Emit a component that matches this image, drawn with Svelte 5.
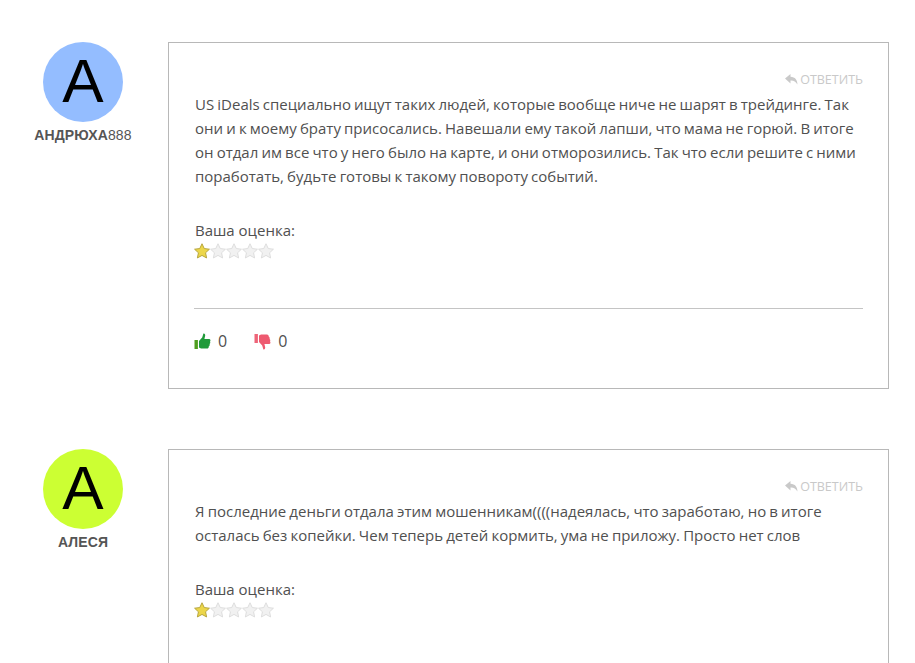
<script>
    const comments = [
        {
            name: 'Андрюха',
            suffix: '888',
            color: '#94bdff',
            lines: [
                'US iDeals специально ищут таких людей, которые вообще ниче не шарят в трейдинге. Так',
                'они и к моему брату присосались. Навешали ему такой лапши, что мама не горюй. В итоге',
                'он отдал им все что у него было на карте, и они отморозились. Так что если решите с ними',
                'поработать, будьте готовы к такому повороту событий.'
            ],
            votes: { up: 0, down: 0 }
        },
        {
            // the rest of this card is below the fold
            name: 'Алеся',
            suffix: '',
            color: '#ccff33',
            lines: [
                'Я последние деньги отдала этим мошенникам((((надеялась, что заработаю, но в итоге',
                'осталась без копейки. Чем теперь детей кормить, ума не приложу. Просто нет слов'
            ],
            votes: null
        }
    ];
    const stars = [1, 2, 3, 4, 5];
    const starPath = 'M8.5 0.8 L10.9 5.9 L16.4 6.6 L12.3 10.4 L13.4 15.9 L8.5 13.2 L3.6 15.9 L4.7 10.4 L0.6 6.6 L6.1 5.9 Z';
</script>

<main class="page">
    {#each comments as c}
        <article class="comment">
            <div class="author">
                <div class="avatar" style="background: {c.color}">А</div>
                <div class="name"><b>{c.name}</b>{c.suffix}</div>
            </div>
            <div class="card">
                <div class="reply">
                    <svg width="13" height="11" viewBox="0 0 13 11">
                        <path d="M5.5 0 L0 4.6 L5.5 9.4 L5.5 6.6 C8.6 6.4 10.8 7.6 12.4 10.6 C12.6 6 10 2.9 5.5 2.7 Z" fill="#c9c9c9" />
                    </svg>
                    <span>ОТВЕТИТЬ</span>
                </div>
                <div class="text">
                    {#each c.lines as line}
                        <div>{line}</div>
                    {/each}
                </div>
                <div class="rating-label">Ваша оценка:</div>
                <div class="stars">
                    {#each stars as s}
                        <svg width="16" height="16" viewBox="0 0 17 17">
                            <path d={starPath} fill={s === 1 ? '#ecd64a' : '#f1f1f1'} stroke={s === 1 ? '#b3a23a' : '#dcdcdc'} stroke-width="1" />
                        </svg>
                    {/each}
                </div>
                {#if c.votes}
                    <hr />
                    <div class="votes">
                        <span class="vote">
                            <svg width="17" height="17" viewBox="0 0 17 17">
                                <rect x="0.5" y="7" width="3.4" height="9" fill="#4f9e1f" />
                                <path d="M5 8 L8.2 4.6 L9.4 0.6 C11 0.4 11.6 2 11 3.6 L10.4 6 L15.4 6 C16.8 6.4 16.6 8 16 8.6 C16.6 9.6 16.2 10.6 15.6 11 C16 12 15.4 13 14.8 13.2 C15 14.6 14 15.6 13 15.6 L7 15.6 L5 14.6 Z" fill="#1f9a3a" />
                            </svg>
                            {c.votes.up}
                        </span>
                        <span class="vote">
                            <svg width="17" height="17" viewBox="0 0 17 17">
                                <rect x="0.5" y="1" width="3.4" height="9" fill="#ee6478" />
                                <path d="M5 9 L8.2 12.4 L9.4 16.4 C11 16.6 11.6 15 11 13.4 L10.4 11 L15.4 11 C16.8 10.6 16.6 9 16 8.4 C16.6 7.4 16.2 6.4 15.6 6 C16 5 15.4 4 14.8 3.8 C15 2.4 14 1.4 13 1.4 L7 1.4 L5 2.4 Z" fill="#ee5a70" />
                            </svg>
                            {c.votes.down}
                        </span>
                    </div>
                {/if}
            </div>
        </article>
    {/each}
</main>

<style>
    :global(html), :global(body) {
        background: #fff;
    }

    .page {
        height: 663px;
        overflow: hidden;
        box-sizing: border-box;
        padding: 42px 26px 0 0;
        font-family: "Open Sans", "Liberation Sans", sans-serif;
        color: #505050;
    }

    .comment {
        display: flex;
        align-items: flex-start;
        margin-bottom: 60px;
    }

    .author {
        width: 168px;
        flex: none;
        display: flex;
        flex-direction: column;
        align-items: center;
        padding-right: 2px;
        box-sizing: border-box;
    }

    .avatar {
        width: 80px;
        height: 80px;
        border-radius: 50%;
        color: #000;
        font-family: "Liberation Sans", sans-serif;
        font-size: 62px;
        line-height: 78px;
        text-align: center;
    }

    .name {
        margin-top: 4px;
        font-family: "Liberation Sans", sans-serif;
        font-size: 14px;
        line-height: 18px;
        letter-spacing: 0.1px;
        text-transform: uppercase;
        color: #555;
    }

    .card {
        flex: 1;
        min-width: 0;
        min-height: 347px;
        border: 1px solid #b8b8b8;
        padding: 27px 25px 38px;
        box-sizing: border-box;
    }

    .reply {
        display: flex;
        justify-content: flex-end;
        align-items: center;
        gap: 2px;
        height: 18px;
        font-size: 12.5px;
        color: #c9c9c9;
    }

    .text {
        margin: 4px 0 0 1px;
        font-size: 15px;
        line-height: 24px;
        word-spacing: -0.75px;
        white-space: nowrap;
    }

    .rating-label {
        margin: 30px 0 0 1px;
        font-size: 15px;
        line-height: 24px;
    }

    .stars {
        display: flex;
        height: 18px;
        padding-top: 1px;
    }

    hr {
        margin: 47px 0 0;
        border: none;
        border-top: 1px solid #c4c4c4;
    }

    .votes {
        display: flex;
        gap: 27px;
        margin-top: 23px;
    }

    .vote {
        display: flex;
        align-items: center;
        gap: 7px;
        font-size: 16px;
        line-height: 18px;
    }
</style>
